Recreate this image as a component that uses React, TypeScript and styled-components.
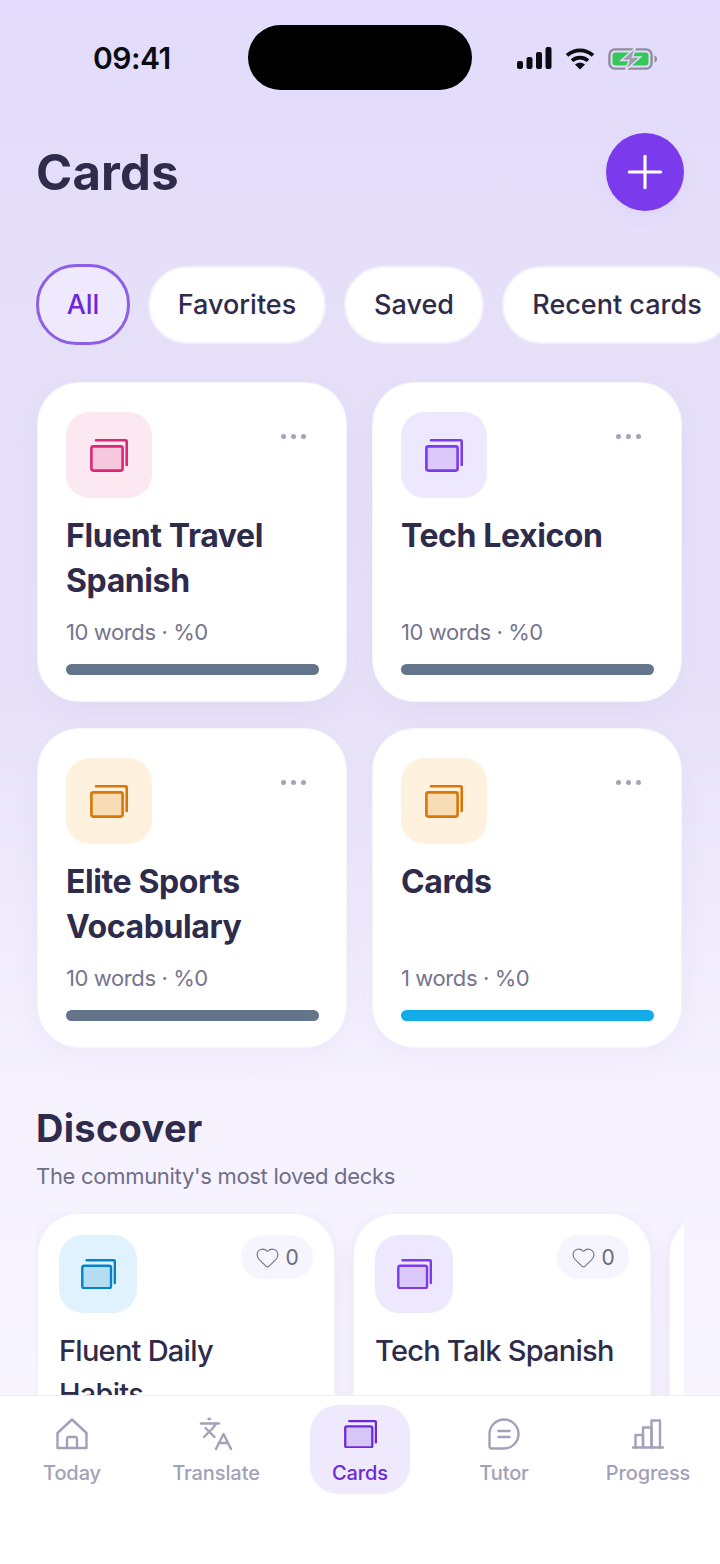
import * as React from 'react';
import styled, { createGlobalStyle } from 'styled-components';
import { Heart, Languages, Plus } from 'lucide-react';

const GlobalStyle = createGlobalStyle`
  html, body {
    margin: 0;
    padding: 0;
    background: #fff;
  }
  * {
    box-sizing: border-box;
  }
`;

const FONT = `Inter, "Noto Sans", sans-serif`;

const Screen = styled.div`
  width: 720px;
  height: 1564px;
  display: flex;
  flex-direction: column;
  overflow: hidden;
  font-family: ${FONT};
  color: #2e2a4a;
  background: linear-gradient(180deg, #e2dbfb 0%, #e5dff9 16%, #e7e2f8 45%, #f5f2fe 70%, #f8f6ff 100%);
`;

const Main = styled.main`
  flex: 1;
  min-height: 0;
  overflow: hidden;
`;

const StatusBar = styled.div`
  display: flex;
  align-items: center;
  height: 65px;
  margin-top: 25px;
  padding-left: 93px;
`;

const Time = styled.div`
  width: 155px;
  font-size: 30px;
  font-weight: 600;
  letter-spacing: -0.5px;
  color: #0b0b12;
`;

const Island = styled.div`
  width: 224px;
  height: 65px;
  border-radius: 33px;
  background: #000;
`;

const StatusIcons = styled.div`
  display: flex;
  align-items: center;
  gap: 13px;
  margin-left: 45px;
  position: relative;
  top: 1px;
`;

const Header = styled.header`
  display: flex;
  align-items: center;
  justify-content: space-between;
  margin-top: 43px;
  padding: 0 36px;
`;

const PageTitle = styled.h1`
  margin: 2px 0 0;
  font-size: 49px;
  line-height: 76px;
  font-weight: 700;
  letter-spacing: 0.2px;
  color: #2f2b4b;
`;

const AddButton = styled.button`
  width: 78px;
  height: 78px;
  padding: 0;
  border: 0;
  border-radius: 50%;
  display: flex;
  align-items: center;
  justify-content: center;
  color: #fff;
  background: #7c3aed;
  box-shadow: 0 6px 20px rgba(124, 58, 237, 0.05);
`;

const Chips = styled.div`
  display: flex;
  align-items: center;
  gap: 18px;
  margin-top: 53px;
  padding-left: 36px;
  height: 81px;
  width: 760px;
`;

const Chip = styled.div<{ $active?: boolean; $w: number }>`
  flex: none;
  width: ${(p) => p.$w}px;
  height: ${(p) => (p.$active ? 81 : 78)}px;
  display: flex;
  align-items: center;
  justify-content: center;
  border-radius: 40px;
  font-size: 27px;
  font-weight: 500;
  color: ${(p) => (p.$active ? '#6d28d9' : '#2f2b4b')};
  background: ${(p) => (p.$active ? '#efe9fe' : '#fff')};
  border: ${(p) => (p.$active ? '3px solid #8b5fe8' : '2px solid #f3f1fc')};
`;

const Grid = styled.div`
  display: grid;
  grid-template-columns: 310px 310px;
  column-gap: 25px;
  row-gap: 26px;
  margin-top: 37px;
  padding-left: 37px;
`;

const DeckCard = styled.article`
  height: 320px;
  padding: 29px 27px 27px 28px;
  border-radius: 42px;
  background: #fff;
  border: 1px solid #f6f4fd;
  box-shadow: 0 10px 28px rgba(90, 70, 170, 0.045);
`;

const CardTop = styled.div`
  display: flex;
  justify-content: space-between;
  align-items: flex-start;
`;

const Tile = styled.div<{ $bg: string; $size: number }>`
  width: ${(p) => p.$size}px;
  height: ${(p) => p.$size}px;
  flex: none;
  display: flex;
  align-items: center;
  justify-content: center;
  border-radius: 24px;
  background: ${(p) => p.$bg};
`;

const Dots = styled.div`
  display: flex;
  gap: 5px;
  margin: 22px 13px 0 0;
`;

const Dot = styled.span`
  width: 5px;
  height: 5px;
  border-radius: 50%;
  background: #a3a3bb;
`;

const DeckTitle = styled.h3`
  height: 90px;
  margin: 15px 0 0;
  font-size: 32px;
  line-height: 45px;
  font-weight: 700;
  letter-spacing: -0.4px;
  color: #2f2b4b;
`;

const Meta = styled.div`
  margin-top: 14px;
  font-size: 22px;
  line-height: 30px;
  letter-spacing: -0.4px;
  color: #76758e;
`;

const Bar = styled.div<{ $color: string }>`
  height: 11px;
  margin-top: 17px;
  border-radius: 6px;
  background: ${(p) => p.$color};
`;

const SectionTitle = styled.h2`
  margin: 56px 0 0 36px;
  font-size: 38px;
  line-height: 48px;
  font-weight: 700;
  letter-spacing: 0.3px;
  color: #2f2b4b;
`;

const SectionSub = styled.p`
  margin: 9px 0 0 36px;
  font-size: 22px;
  line-height: 30px;
  letter-spacing: -0.3px;
  color: #6f6e88;
`;

const Scroller = styled.div`
  display: flex;
  gap: 18px;
  width: 648px;
  margin: 21px 0 0 36px;
  padding: 1px 0 40px 1px;
  overflow: hidden;
`;

const DiscoverCard = styled.article`
  flex: none;
  width: 298px;
  height: 320px;
  padding: 21px 21px 0 21px;
  border-radius: 42px;
  background: #fff;
  border: 1px solid #f5f3fc;
  box-shadow: 0 6px 20px rgba(90, 70, 170, 0.09);
`;

const LikePill = styled.div`
  display: flex;
  align-items: center;
  justify-content: center;
  gap: 5px;
  width: 72px;
  height: 44px;
  border-radius: 22px;
  background: #f6f4fd;
  font-size: 21px;
  color: #6b6a80;
`;

const DiscoverTitle = styled.h3`
  max-width: 244px;
  margin: 16px 0 0;
  font-size: 29px;
  line-height: 43px;
  font-weight: 500;
  letter-spacing: -0.75px;
  color: #2f2b4b;
`;

const Nav = styled.nav`
  flex: none;
  height: 169px;
  display: grid;
  grid-template-columns: repeat(5, 144px);
  align-items: start;
  padding-top: 9px;
  background: #fff;
  border-top: 1px solid #efedf6;
`;

const NavCell = styled.div`
  display: flex;
  justify-content: center;
`;

const NavItem = styled.div<{ $active?: boolean }>`
  width: 100px;
  height: 89px;
  display: flex;
  flex-direction: column;
  align-items: center;
  justify-content: flex-start;
  padding-top: 14px;
  border-radius: 28px;
  white-space: nowrap;
  font-size: 20px;
  line-height: 28px;
  font-weight: 500;
  letter-spacing: -0.1px;
  color: ${(p) => (p.$active ? '#6d28d9' : '#a1a1b9')};
  background: ${(p) => (p.$active ? '#efe9fe' : 'transparent')};
`;

const NavIcon = styled.div`
  height: 30px;
  margin-bottom: 10px;
  display: flex;
  align-items: center;
  justify-content: center;
`;

type Tone = { bg: string; stroke: string; fill: string };

const PINK: Tone = { bg: '#fbe8f1', stroke: '#db2777', fill: '#f6c8dd' };
const PURPLE: Tone = { bg: '#eee8fe', stroke: '#7c3aed', fill: '#dac9fa' };
const ORANGE: Tone = { bg: '#fef2df', stroke: '#d97706', fill: '#f7dcb6' };
const BLUE: Tone = { bg: '#e0f2fe', stroke: '#0284c7', fill: '#b6dcf3' };

const CardsIcon = ({ tone, width }: { tone: Tone; width: number }) => (
  <svg width={width} height={(width * 33) / 38} viewBox="0 0 38 33" fill="none">
    <rect x="1.4" y="7.4" width="31.2" height="24.2" rx="2" fill={tone.fill} stroke={tone.stroke} strokeWidth="2.6" />
    <path d="M6 1.3h29.7a1 1 0 0 1 1 1V26" stroke={tone.stroke} strokeWidth="2.6" strokeLinecap="round" />
  </svg>
);

const SignalIcon = () => (
  <svg width="35" height="23" viewBox="0 0 35 23" fill="#0b0b12">
    <rect x="0" y="14" width="6" height="8" rx="2" />
    <rect x="9.5" y="10" width="6" height="12" rx="2" />
    <rect x="19" y="5" width="6" height="17" rx="2" />
    <rect x="28.5" y="0" width="6" height="22" rx="2" />
  </svg>
);

const WifiIcon = () => (
  <svg width="30" height="23" viewBox="0 0 30 23" fill="none" stroke="#0b0b12" strokeWidth="3.8">
    <path d="M2 8.4C9.4 1.6 20.6 1.6 28 8.4" />
    <path d="M7 13.6c4.6-4 11.4-4 16 0" />
    <path d="M15 22.5l-5-5.1c2.8-2.3 7.2-2.3 10 0z" fill="#0b0b12" stroke="none" />
  </svg>
);

const BatteryIcon = () => (
  <svg width="50" height="24" viewBox="0 0 50 24" fill="none">
    <rect x="1.4" y="2.4" width="42.2" height="19.2" rx="5.5" stroke="#8f8d9c" strokeWidth="2.4" />
    <rect x="4.5" y="5.5" width="36" height="13" rx="3" fill="#35c759" />
    <path d="M46.5 8.5c1.8.6 2.6 2 2.6 3.5s-.8 2.9-2.6 3.5z" fill="#8f8d9c" />
    <path d="M27.5 0.5L13 13.5h8L17.5 23.5l15-13.5h-8z" fill="#9f9dab" stroke="#e3dcfa" strokeWidth="1.5" />
  </svg>
);

const HomeIcon = () => (
  <svg width="32" height="32" viewBox="0 0 32 32" fill="none" stroke="currentColor" strokeWidth="2.4" strokeLinejoin="round">
    <path d="M1.5 15L16 1.5 30.5 15v15H1.5z" />
    <path d="M11 30V21a2 2 0 0 1 2-2h6a2 2 0 0 1 2 2v9" />
  </svg>
);

const TutorIcon = () => (
  <svg width="32" height="32" viewBox="0 0 32 32" fill="none" stroke="currentColor" strokeWidth="2.4" strokeLinecap="round" strokeLinejoin="round">
    <path d="M16 1.5C24 1.5 30.5 8 30.5 16S24 30.5 16 30.5H3.5a2 2 0 0 1-2-2V16C1.5 8 8 1.5 16 1.5z" />
    <path d="M10.5 13h11M10.5 19h11" />
  </svg>
);

const ProgressIcon = () => (
  <svg width="32" height="32" viewBox="0 0 32 32" fill="none" stroke="currentColor" strokeWidth="2.4" strokeLinecap="round" strokeLinejoin="round">
    <path d="M1 29.5h30" />
    <path d="M3.5 29.5V17H11v12.5" />
    <path d="M11 29.5V9.5h8.5v20" />
    <path d="M19.5 29.5V2.5H28v27" />
  </svg>
);

const decks = [
  { title: 'Fluent Travel Spanish', meta: '10 words · %0', tone: PINK, bar: '#64748b' },
  { title: 'Tech Lexicon', meta: '10 words · %0', tone: PURPLE, bar: '#64748b' },
  { title: 'Elite Sports Vocabulary', meta: '10 words · %0', tone: ORANGE, bar: '#64748b' },
  { title: 'Cards', meta: '1 words · %0', tone: ORANGE, bar: '#12ace9' },
];

const discover = [
  { title: 'Fluent Daily Habits', tone: BLUE },
  { title: 'Tech Talk Spanish', tone: PURPLE },
];

const chips = [
  { label: 'All', w: 94, active: true },
  { label: 'Favorites', w: 178 },
  { label: 'Saved', w: 140 },
  { label: 'Recent cards', w: 230 },
];

const NAV_PURPLE: Tone = { bg: '#efe9fe', stroke: '#6d28d9', fill: '#d6c6f8' };

export default function App() {
  return (
    <Screen>
      <GlobalStyle />
      <Main>
        <StatusBar>
          <Time>09:41</Time>
          <Island />
          <StatusIcons>
            <SignalIcon />
            <WifiIcon />
            <BatteryIcon />
          </StatusIcons>
        </StatusBar>

        <Header>
          <PageTitle>Cards</PageTitle>
          <AddButton aria-label="Add">
            <Plus size={54} strokeWidth={1.4} />
          </AddButton>
        </Header>

        <Chips>
          {chips.map((c) => (
            <Chip key={c.label} $active={c.active} $w={c.w}>
              {c.label}
            </Chip>
          ))}
        </Chips>

        <Grid>
          {decks.map((d) => (
            <DeckCard key={d.title}>
              <CardTop>
                <Tile $bg={d.tone.bg} $size={86}>
                  <CardsIcon tone={d.tone} width={38} />
                </Tile>
                <Dots>
                  <Dot />
                  <Dot />
                  <Dot />
                </Dots>
              </CardTop>
              <DeckTitle>{d.title}</DeckTitle>
              <Meta>{d.meta}</Meta>
              <Bar $color={d.bar} />
            </DeckCard>
          ))}
        </Grid>

        <SectionTitle>Discover</SectionTitle>
        <SectionSub>The community's most loved decks</SectionSub>

        <Scroller>
          {discover.map((d) => (
            <DiscoverCard key={d.title}>
              <CardTop>
                <Tile $bg={d.tone.bg} $size={78}>
                  <CardsIcon tone={d.tone} width={35} />
                </Tile>
                <LikePill>
                  <Heart size={25} strokeWidth={1.1} color="#77768c" />
                  0
                </LikePill>
              </CardTop>
              <DiscoverTitle>{d.title}</DiscoverTitle>
            </DiscoverCard>
          ))}
          <DiscoverCard />
        </Scroller>
      </Main>

      <Nav>
        <NavCell>
          <NavItem>
            <NavIcon><HomeIcon /></NavIcon>
            Today
          </NavItem>
        </NavCell>
        <NavCell>
          <NavItem>
            <NavIcon><Languages size={36} strokeWidth={1.6} /></NavIcon>
            Translate
          </NavItem>
        </NavCell>
        <NavCell>
          <NavItem $active>
            <NavIcon><CardsIcon tone={NAV_PURPLE} width={33} /></NavIcon>
            Cards
          </NavItem>
        </NavCell>
        <NavCell>
          <NavItem>
            <NavIcon><TutorIcon /></NavIcon>
            Tutor
          </NavItem>
        </NavCell>
        <NavCell>
          <NavItem>
            <NavIcon><ProgressIcon /></NavIcon>
            Progress
          </NavItem>
        </NavCell>
      </Nav>
    </Screen>
  );
}
